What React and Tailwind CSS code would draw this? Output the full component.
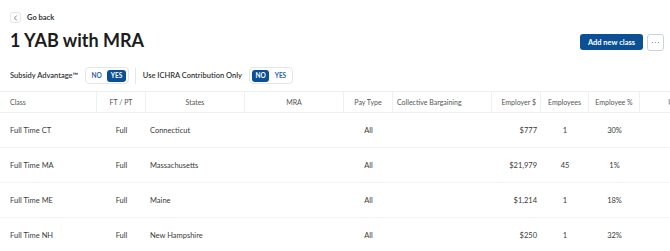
import React from 'react';

const columns = [
  { key: 'cls', label: 'Class', w: 'w-[97px]', head: 'justify-start pl-[10px]', cell: 'justify-start pl-[10px]' },
  { key: 'ft', label: 'FT / PT', w: 'w-[49px]', head: 'justify-center', cell: 'justify-center' },
  { key: 'states', label: 'States', w: 'w-[99px]', head: 'justify-center', cell: 'justify-start pl-[4px]' },
  { key: 'mra', label: 'MRA', w: 'w-[99px]', head: 'justify-center', cell: 'justify-center' },
  { key: 'pay', label: 'Pay Type', w: 'w-[49px]', head: 'justify-center', cell: 'justify-center' },
  { key: 'cb', label: 'Collective Bargaining', w: 'w-[99px]', head: 'justify-start pl-[4px]', cell: 'justify-start pl-[4px]' },
  { key: 'emp', label: 'Employer $', w: 'w-[49px]', head: 'justify-end pr-[4px]', cell: 'justify-end pr-[4px]' },
  { key: 'count', label: 'Employees', w: 'w-[48px]', head: 'justify-center', cell: 'justify-center' },
  { key: 'pct', label: 'Employee %', w: 'w-[51px]', head: 'justify-center', cell: 'justify-center' },
  { key: 'u', label: 'Unassigned', w: 'w-[92px]', head: 'justify-center', cell: 'justify-center' },
];

const rows = [
  { cls: 'Full Time CT', ft: 'Full', states: 'Connecticut', mra: '', pay: 'All', cb: '', emp: '$777', count: '1', pct: '30%', u: '' },
  { cls: 'Full Time MA', ft: 'Full', states: 'Massachusetts', mra: '', pay: 'All', cb: '', emp: '$21,979', count: '45', pct: '1%', u: '' },
  { cls: 'Full Time ME', ft: 'Full', states: 'Maine', mra: '', pay: 'All', cb: '', emp: '$1,214', count: '1', pct: '18%', u: '' },
  { cls: 'Full Time NH', ft: 'Full', states: 'New Hampshire', mra: '', pay: 'All', cb: '', emp: '$250', count: '1', pct: '32%', u: '' },
];

const Toggle = ({ value }) => (
  <div className="flex items-center h-[17px] px-[2px] gap-[2px] border border-[#e3e6ea] rounded-[4px] bg-white">
    <span className={`px-[3.5px] h-[12px] flex items-center rounded-[3px] text-[6.5px] font-bold ${value === 'NO' ? 'bg-[#0b4f94] text-white' : 'text-[#2c63a8]'}`}>NO</span>
    <span className={`px-[3.5px] h-[12px] flex items-center rounded-[3px] text-[6.5px] font-bold ${value === 'YES' ? 'bg-[#0b4f94] text-white' : 'text-[#2c63a8]'}`}>YES</span>
  </div>
);

export default function App() {
  return (
    <div className="w-[670px] h-[251px] overflow-hidden bg-white text-[#1c1c1c]" style={{ fontFamily: 'Lato, "Noto Sans", sans-serif' }}>
      {/* Go back */}
      <div className="flex items-center gap-[6px] pl-[10px] pt-[12px]">
        <button className="w-[11px] h-[11px] border border-[#e2e4e7] rounded-[3px] flex items-center justify-center">
          <svg width="5" height="6" viewBox="0 0 5 6" fill="none">
            <path d="M3.5 0.8 L1.4 3 L3.5 5.2" stroke="#666" strokeWidth="0.8" strokeLinecap="round" strokeLinejoin="round" />
          </svg>
        </button>
        <span className="text-[7.5px] font-bold text-[#333]">Go back</span>
      </div>

      {/* Title row */}
      <div className="flex items-center justify-between pl-[10px] pr-[6px] mt-[6px]">
        <h1 className="text-[18px] font-bold leading-[22px]">1 YAB with MRA</h1>
        <div className="flex items-center gap-[4px] mt-[4px]">
          <button className="h-[16px] w-[63px] rounded-[3px] bg-[#0b4f94] text-white text-[7.5px] font-bold">Add new class</button>
          <button className="w-[17px] h-[17px] rounded-[3px] border border-[#c9d3e0] flex items-center justify-center gap-[1.5px]">
            <span className="w-[1.5px] h-[1.5px] rounded-full bg-[#6a7a90]" />
            <span className="w-[1.5px] h-[1.5px] rounded-full bg-[#6a7a90]" />
            <span className="w-[1.5px] h-[1.5px] rounded-full bg-[#6a7a90]" />
          </button>
        </div>
      </div>

      {/* Settings row */}
      <div className="flex items-center pl-[10px] mt-[16px] h-[17px]">
        <span className="text-[7.5px] font-semibold text-[#333]">Subsidy Advantage™</span>
        <div className="ml-[7px]"><Toggle value="YES" /></div>
        <div className="w-px h-[16px] bg-[#e4e6e9] ml-[6px]" />
        <span className="ml-[7px] text-[7.5px] font-semibold text-[#333]">Use ICHRA Contribution Only</span>
        <div className="ml-[7px]"><Toggle value="NO" /></div>
      </div>

      {/* Table */}
      <div className="mt-[7px] border-t border-[#eef0f2] w-[732px]">
        <div className="flex h-[21px] border-b border-[#eef0f2]">
          {columns.map((c, i) => (
            <div key={c.key} className={`${c.w} flex items-center text-[7px] text-[#555] ${c.head} ${i < columns.length - 1 ? 'border-r border-[#eef0f2]' : ''}`}>
              {c.label}
            </div>
          ))}
        </div>
        {rows.map((r, ri) => (
          <div key={ri} className="flex h-[35px] border-b border-[#f3f4f6]">
            {columns.map(c => (
              <div key={c.key} className={`${c.w} flex items-center text-[7.5px] text-[#3a3a3a] ${c.cell}`}>
                {r[c.key]}
              </div>
            ))}
          </div>
        ))}
      </div>
    </div>
  );
}
